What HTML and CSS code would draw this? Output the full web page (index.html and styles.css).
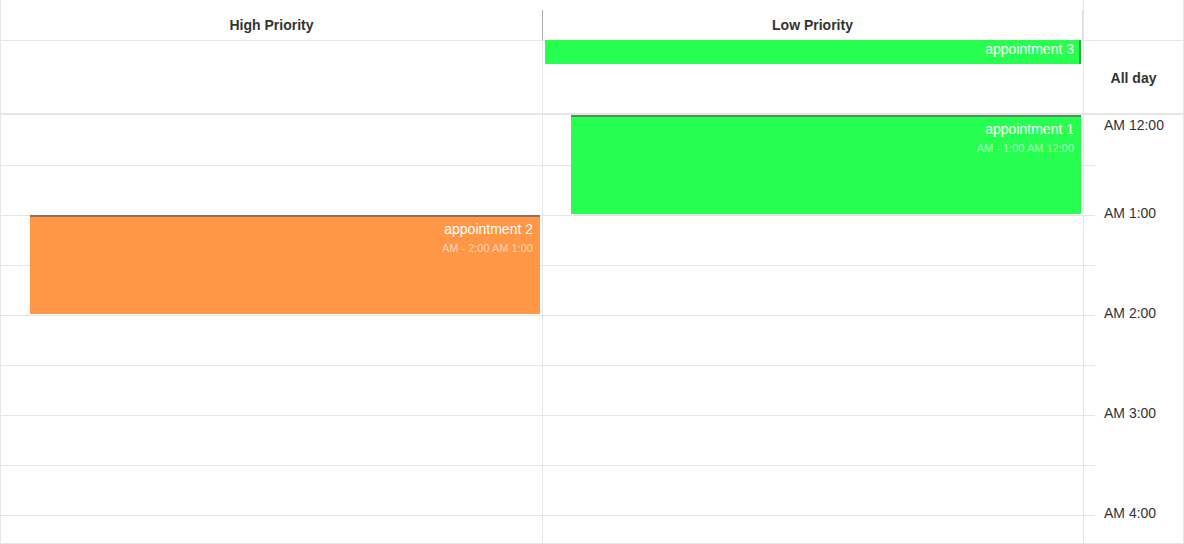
FILE: index.html
```html
<!DOCTYPE html>
<html>
<head>
<meta charset="utf-8">
<link rel="stylesheet" href="styles.css">
</head>
<body>
<div class="scheduler">
  <div class="group-head"><div class="label">High Priority</div></div>
  <div class="group-head second"><div class="label">Low Priority</div></div>
  <div class="tp-head"></div>

  <div class="allday first"></div>
  <div class="allday">
    <div class="appt appt-green appt-allday"><div class="title">appointment 3</div></div>
  </div>
  <div class="tp-allday">All day</div>

  <div class="col first">
    <div class="slot"></div><div class="slot"></div><div class="slot"></div>
    <div class="slot"></div><div class="slot"></div><div class="slot"></div>
    <div class="slot"></div><div class="slot"></div><div class="slot"></div>
    <div class="appt appt-orange appt-2">
      <div class="title">appointment 2</div>
      <div class="time">AM - 2:00 AM 1:00</div>
    </div>
  </div>
  <div class="col">
    <div class="slot"></div><div class="slot"></div><div class="slot"></div>
    <div class="slot"></div><div class="slot"></div><div class="slot"></div>
    <div class="slot"></div><div class="slot"></div><div class="slot"></div>
    <div class="appt appt-green appt-1">
      <div class="title">appointment 1</div>
      <div class="time">AM - 1:00 AM 12:00</div>
    </div>
  </div>
  <div class="tp-body">
    <div class="t0">AM 12:00</div>
    <div class="t">AM 1:00</div>
    <div class="t">AM 2:00</div>
    <div class="t">AM 3:00</div>
    <div class="t">AM 4:00</div>
  </div>
</div>
</body>
</html>
```

FILE: styles.css
```css
* { box-sizing: border-box; }
html, body { margin: 0; background: #fff; }
body { font-family: "Liberation Sans", Arial, sans-serif; color: #333; }

.scheduler {
  width: 1184px;
  height: 544px;
  border: 1px solid #e6e6e6;
  border-top: 0;
  display: grid;
  grid-template-columns: 542px 540px 100px;
  grid-template-rows: 41px 74px 1fr;
  overflow: hidden;
}

.group-head {
  border-bottom: 1px solid #e6e6e6;
  padding-top: 10px;
}
.group-head .label {
  height: 30px;
  line-height: 30px;
  text-align: center;
  font-weight: bold;
  font-size: 14px;
  border-right: 1px solid #aaa;
}
.group-head.second .label { border-right-color: #ddd; }

.tp-head {
  border-left: 1px solid #e6e6e6;
  border-bottom: 1px solid #e6e6e6;
}

.allday {
  position: relative;
  border-bottom: 2px solid #e6e6e6;
}
.allday.first { border-right: 1px solid #e6e6e6; }

.tp-allday {
  border-left: 1px solid #e6e6e6;
  border-bottom: 2px solid #e6e6e6;
  display: flex;
  align-items: center;
  justify-content: center;
  padding-top: 2px;
  font-weight: bold;
  font-size: 14px;
}

.col { position: relative; }
.col.first { border-right: 1px solid #e6e6e6; }
.slot { height: 50px; border-top: 1px solid #e6e6e6; }
.slot:first-child { border-top: 0; }

.tp-body {
  border-left: 1px solid #e6e6e6;
  padding-left: 20px;
  font-size: 14px;
  color: #333;
  background: repeating-linear-gradient(to bottom, transparent 0 49px, #e6e6e6 49px 50px) 0 1px / 11px 100% no-repeat;
}
.tp-body .t0 { height: 48px; line-height: 20px; }
.tp-body .t { height: 100px; line-height: 100px; }

.appt {
  position: absolute;
  color: #fff;
  text-align: right;
  padding-right: 7px;
  font-size: 14px;
}
.appt-green { background: #26ff50; }
.appt-orange { background: #ff9747; }

.appt .title { line-height: 18px; }
.appt .time {
  font-size: 11px;
  line-height: 20px;
  color: rgba(255, 255, 255, 0.6);
}

.appt-allday {
  top: -1px;
  left: 2px;
  right: 2px;
  height: 24px;
  box-shadow: inset -2px 0 0 rgba(0, 0, 0, 0.3);
}

.appt-1, .appt-2 {
  height: 99px;
  padding-top: 5px;
  box-shadow: inset 0 2px 0 rgba(0, 0, 0, 0.3);
}
.appt-1 { top: 0; left: 28px; right: 2px; }
.appt-2 { top: 100px; left: 29px; right: 2px; }
```
